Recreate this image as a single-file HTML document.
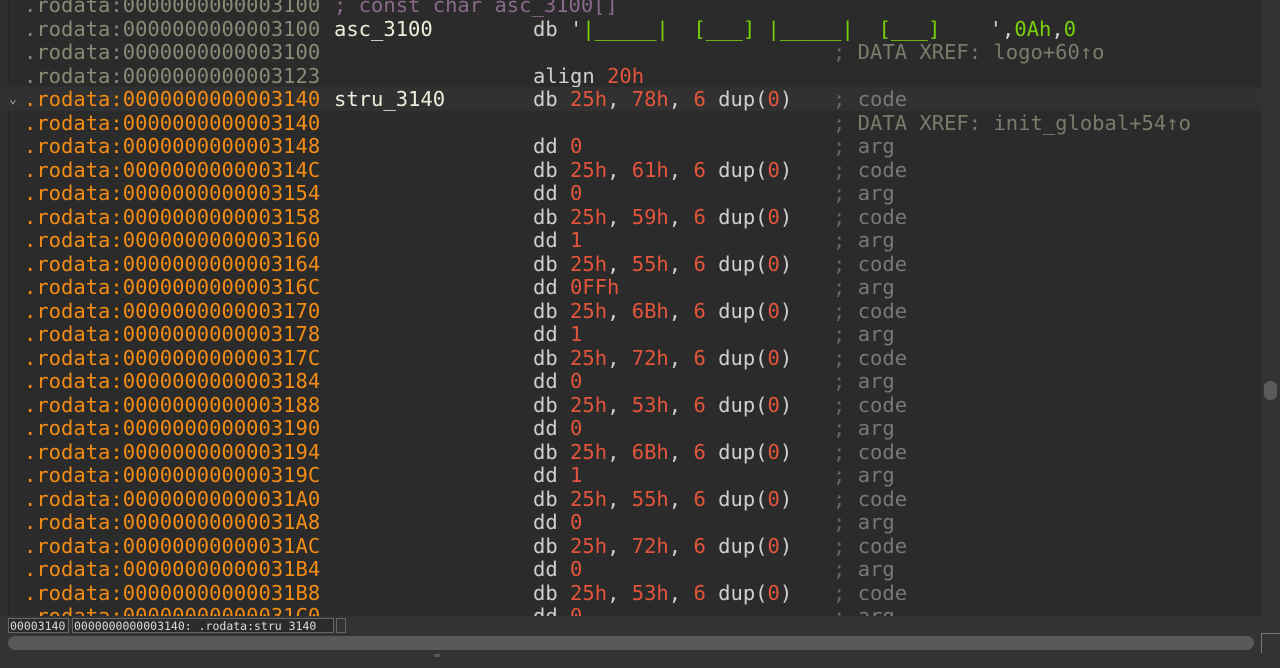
<!DOCTYPE html>
<html><head><meta charset="utf-8"><style>
html,body{margin:0;padding:0;width:1280px;height:668px;overflow:hidden;background:#333;}
#ed{position:absolute;left:0;top:0;width:1261px;height:616px;background:#2b2b2b;overflow:hidden;}
#gut{position:absolute;left:0;top:0;width:8px;height:616px;background:#2e2e2e;border-right:1px solid #262626;}
.r{position:absolute;left:0;width:1261px;height:23.5px;font-family:"DejaVu Sans Mono","Liberation Mono",monospace;font-size:20.5px;line-height:23.5px;white-space:pre;}
.r span{position:absolute;top:1px;}
.r span span{top:0}
.a{left:24px;color:#898a76}
.o{left:24px;color:#f28c14}
.l{left:334px;color:#eeeedc}
.m{left:533px;color:#cfcfcf}
.c{left:833px;color:#7b7b6c}
.n{color:#e2553b}
.g{color:#78d00a}
.p{color:#8a6a8a}
.k{color:#787878}
.sc{color:#666}
</style></head><body>
<div id="ed"><div id="gut"></div>
<div class="r" style="top:-7px"><span class="a">.rodata:0000000000003100</span><span class="p" style="left:334px">; const char asc_3100[]</span></div>
<div class="r" style="top:16.5px"><span class="a">.rodata:0000000000003100</span><span class="l">asc_3100</span><span class="m">db '<span class="g" style="position:static">|_____|  [___] |_____|  [___]    </span>',<span class="g" style="position:static">0Ah</span>,<span class="g" style="position:static">0</span></span></div>
<div class="r" style="top:40px"><span class="a">.rodata:0000000000003100</span><span class="c"><span class="sc" style="position:static">;</span> DATA XREF: logo+60↑o</span></div>
<div class="r" style="top:63.5px"><span class="a">.rodata:0000000000003123</span><span class="m">align <span class="n" style="position:static">20h</span></span></div>
<div class="r" style="top:87px;background:#313131"><span style="left:9px;color:#aaa;font-size:13px">⌄</span><span class="o">.rodata:0000000000003140</span><span class="l">stru_3140</span><span class="m">db <b class="n" style="font-weight:normal">25h</b>, <b class="n" style="font-weight:normal">78h</b>, <b class="n" style="font-weight:normal">6</b> dup(<b class="n" style="font-weight:normal">0</b>)</span><span class="c"><span class="sc" style="position:static">;</span> <span class="k" style="position:static">code</span></span></div>
<div class="r" style="top:110.5px"><span class="o">.rodata:0000000000003140</span><span class="c"><span class="sc" style="position:static">;</span> DATA XREF: init_global+54↑o</span></div>
<div id="rows"></div>
</div>
<div style="position:absolute;left:1264px;top:381px;width:13px;height:19px;border-radius:6px;background:#5a5a5a"></div>
<div style="position:absolute;left:8px;top:618px;width:61px;height:15px;border:1px solid #666;background:#2b2b2b;color:#ddd;font:11.5px 'DejaVu Sans Mono',monospace;line-height:14px;padding-left:1px;box-sizing:border-box;overflow:hidden">00003140</div>
<div style="position:absolute;left:72px;top:618px;width:262px;height:15px;border:1px solid #666;background:#2b2b2b;color:#ddd;font:11.5px 'DejaVu Sans Mono',monospace;line-height:14px;padding-left:1px;box-sizing:border-box;overflow:hidden">0000000000003140: .rodata:stru_3140</div>
<div style="position:absolute;left:336px;top:618px;width:10px;height:15px;border:1px solid #666;box-sizing:border-box"></div>
<div style="position:absolute;left:8px;top:636px;width:1246px;height:14px;border-radius:7px;background:#595959"></div>
<div style="position:absolute;left:1261px;top:633px;width:19px;height:20px;border-left:1px solid #777;border-top:1px solid #777;box-sizing:border-box"></div>
<div style="position:absolute;left:434px;top:654px;width:6px;height:3px;background:#555"></div>
<script>
var d=[["3148","dd",[0]],["314C","db",[0x61]],["3154","dd",[0]],["3158","db",[0x59]],["3160","dd",[1]],["3164","db",[0x55]],["316C","dd",["0FFh"]],["3170","db",[0x6B]],["3178","dd",[1]],["317C","db",[0x72]],["3184","dd",[0]],["3188","db",[0x53]],["3190","dd",[0]],["3194","db",[0x6B]],["319C","dd",[1]],["31A0","db",[0x55]],["31A8","dd",[0]],["31AC","db",[0x72]],["31B4","dd",[0]],["31B8","db",[0x53]],["31C0","dd",[0]]];
var h="";
d.forEach(function(e,i){var t=-7+(i+6)*23.5;var m,c;
if(e[1]=="dd"){var v=e[2][0];m='dd <b class="n" style="font-weight:normal">'+v+'</b>';c="arg";}
else{var hx=e[2][0].toString(16).toUpperCase()+"h";m='db <b class="n" style="font-weight:normal">25h</b>, <b class="n" style="font-weight:normal">'+hx+'</b>, <b class="n" style="font-weight:normal">6</b> dup(<b class="n" style="font-weight:normal">0</b>)';c="code";}
h+='<div class="r" style="top:'+t+'px"><span class="o">.rodata:000000000000'+e[0]+'</span><span class="m">'+m+'</span><span class="c"><span class="sc" style="position:static">;</span> <span class="k" style="position:static">'+c+'</span></span></div>';});
document.getElementById("rows").outerHTML=h;
</script>
</body></html>
